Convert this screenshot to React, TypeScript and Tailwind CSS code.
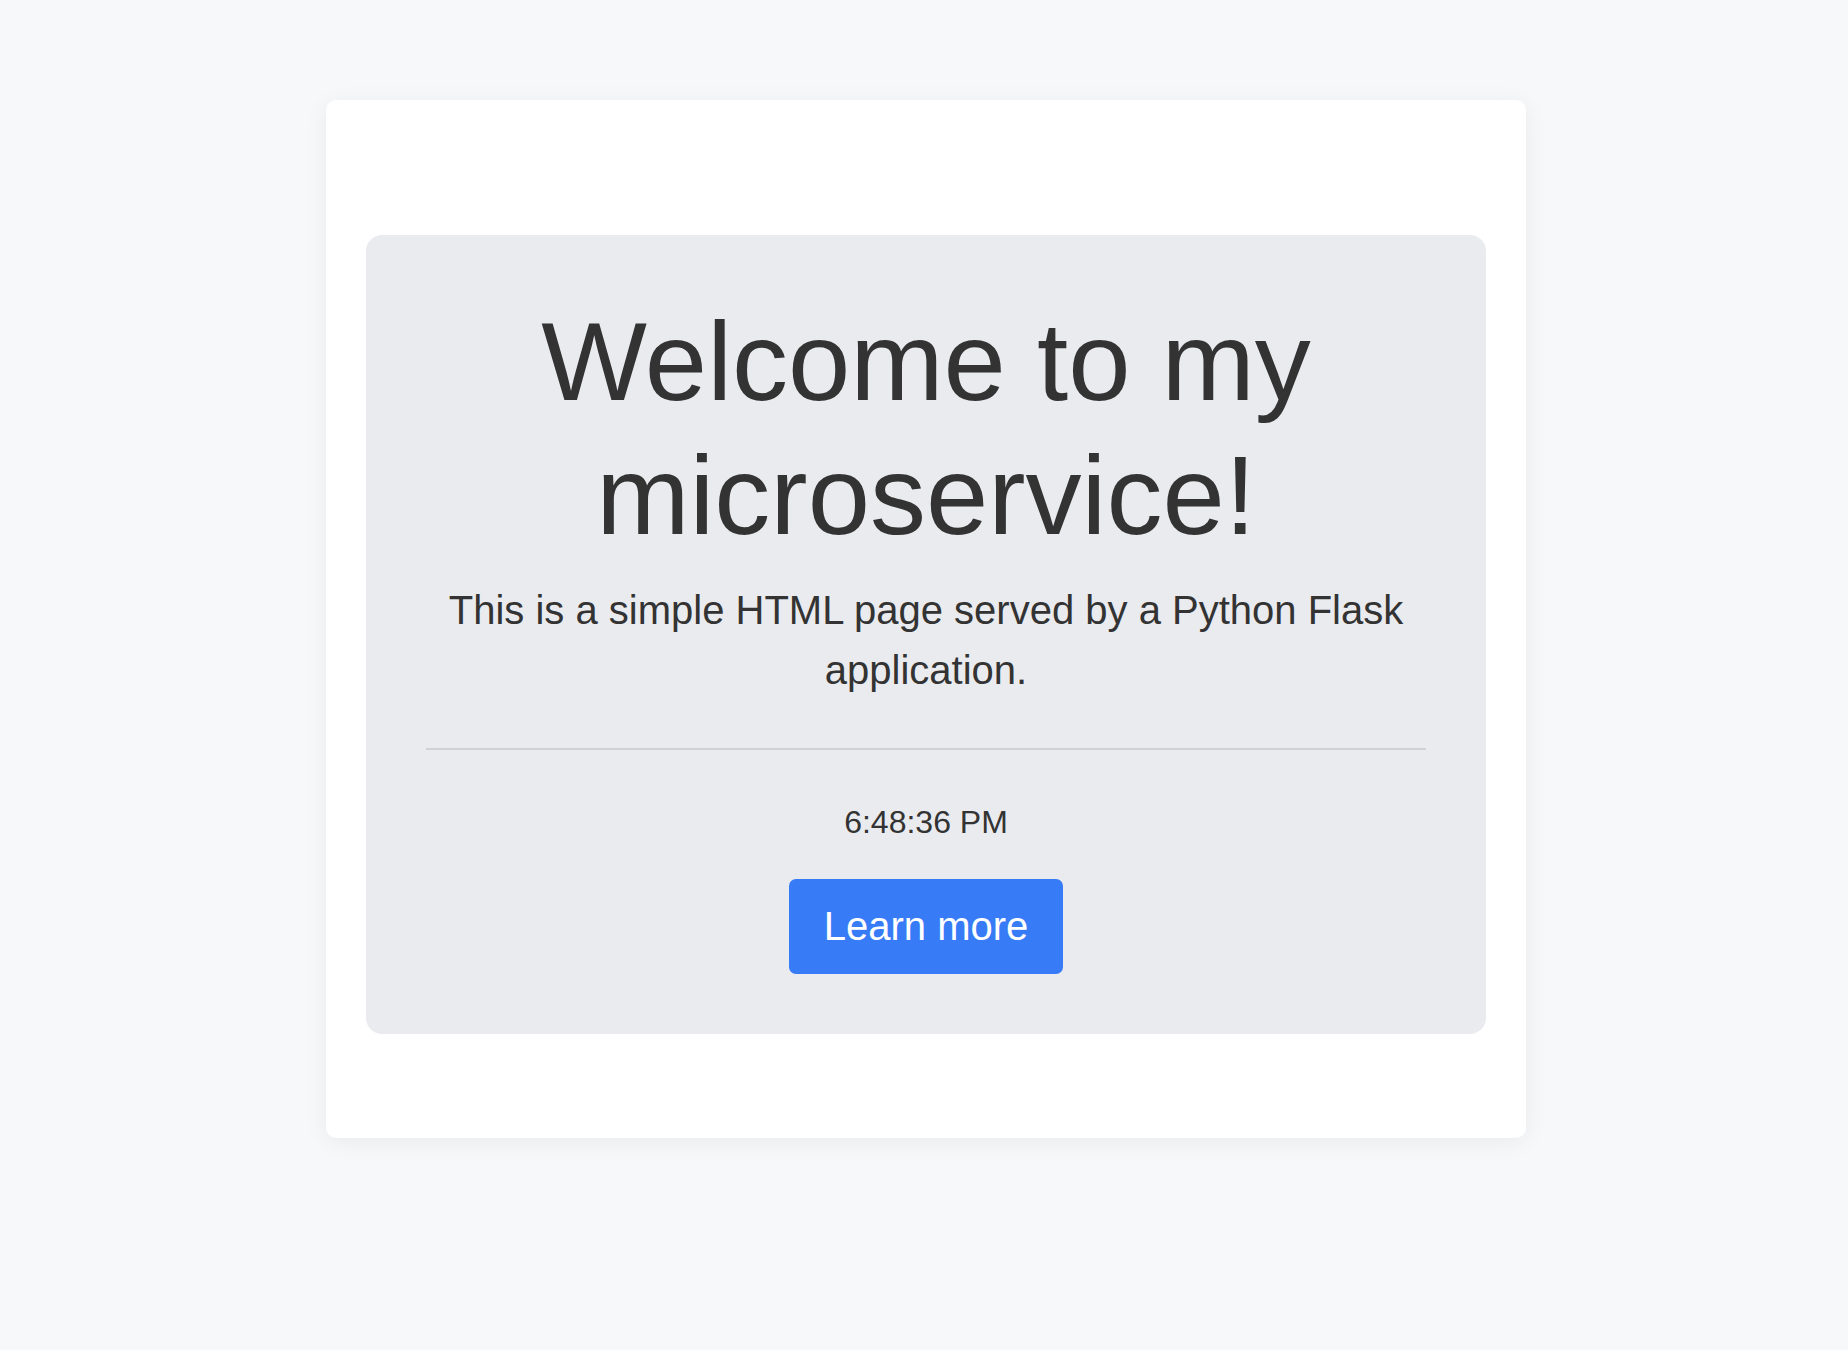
const App = () => {
  return (
    <div className="min-h-[1350px] bg-[#f7f8fa] pt-[100px] pl-[4px] font-['Liberation_Sans',Arial,sans-serif] text-[#333333]">
      {/* Outer card */}
      <div className="mx-auto w-[1200px] rounded-[10px] bg-white px-10 pt-[135px] pb-[104px] shadow-[0_4px_24px_rgba(0,0,0,0.06)]">
        {/* Hero panel */}
        <div className="rounded-[16px] bg-[#eaebef] p-[60px] text-center">
          <h1 className="text-[112px] leading-[1.2] font-normal">
            Welcome to my microservice!
          </h1>
          <p className="mt-[16px] px-[20px] text-[40px] leading-[1.5]">
            This is a simple HTML page served by a Python Flask application.
          </p>
          <hr className="mt-[48px] h-[2px] border-0 bg-[#cfd1d6]" />
          <p className="mt-[48px] text-[32px] leading-[1.5]">6:48:36 PM</p>
          <button className="mt-[33px] rounded-[7px] bg-[#377cf6] px-[35px] py-[17.5px] text-[40px] leading-[1.5] text-white">
            Learn more
          </button>
        </div>
      </div>
    </div>
  );
};

export default App;
